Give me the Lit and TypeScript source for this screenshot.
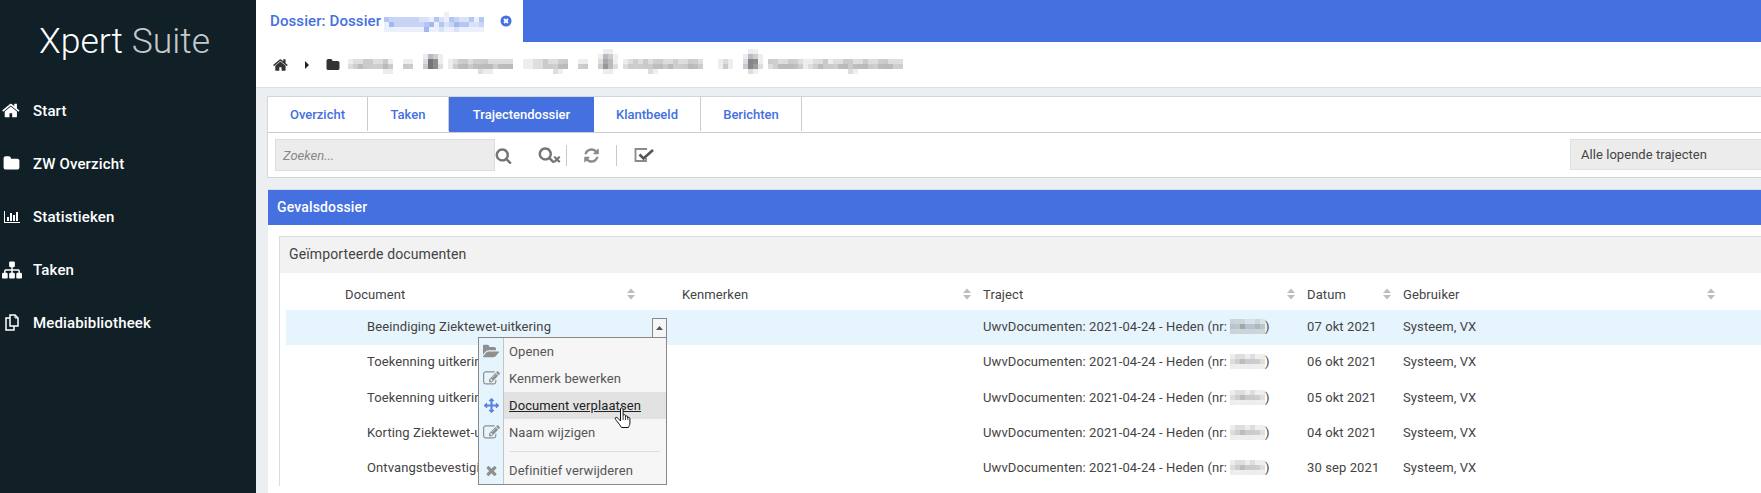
import { LitElement, html, css, svg } from "lit";
import { customElement } from "lit/decorators.js";

const P = {
  home: "M1408 992v480q0 26-19 45t-45 19h-384v-384h-256v384h-384q-26 0-45-19t-19-45v-480q0-1 .5-3t.5-3l575-474 575 474q1 2 1 6zm223-69l-62 74q-8 9-21 11h-3q-13 0-21-7l-692-577-692 577q-12 8-24 7-13-2-21-11l-62-74q-8-10-7-23.500t11-21.500l719-599q32-26 76-26t76 26l244 204v-195q0-14 9-23t23-9h192q14 0 23 9t9 23v408l219 182q10 8 11 21.500t-7 23.500z",
  folder: "M1728 608v704q0 92-66 158t-158 66h-1216q-92 0-158-66t-66-158v-960q0-92 66-158t158-66h320q92 0 158 66t66 158v32h672q92 0 158 66t66 158z",
  chart: "M640 896v512h-256v-512h256zm384-512v1024h-256v-1024h256zm1024 1152v128h-2048v-1536h128v1408h1920zm-640-896v768h-256v-768h256zm384-384v1152h-256v-1152h256z",
  sitemap: "M1792 1248v320q0 40-28 68t-68 28h-320q-40 0-68-28t-28-68v-320q0-40 28-68t68-28h96v-192h-512v192h96q40 0 68 28t28 68v320q0 40-28 68t-68 28h-320q-40 0-68-28t-28-68v-320q0-40 28-68t68-28h96v-192h-512v192h96q40 0 68 28t28 68v320q0 40-28 68t-68 28h-320q-40 0-68-28t-28-68v-320q0-40 28-68t68-28h96v-192q0-52 38-90t90-38h512v-192h-96q-40 0-68-28t-28-68v-320q0-40 28-68t68-28h320q40 0 68 28t28 68v320q0 40-28 68t-68 28h-96v192h512q52 0 90 38t38 90v192h96q40 0 68 28t28 68z",
  search: "M1216 832q0-185-131.500-316.500t-316.500-131.500-316.500 131.500-131.500 316.500 131.500 316.500 316.500 131.500 316.500-131.500 131.500-316.500zm512 832q0 52-38 90t-90 38q-54 0-90-38l-343-342q-179 124-399 124-143 0-273.500-55.500t-225-150-150-225-55.500-273.500 55.500-273.500 150-225 225-150 273.500-55.500 273.500 55.500 225 150 150 225 55.500 273.500q0 220-124 399l343 343q37 37 37 90z",
  refresh: "M1639 1056q0 5-1 7-64 268-268 434.500t-478 166.500q-146 0-282.500-55t-243.500-157l-129 129q-19 19-45 19t-45-19-19-45v-448q0-26 19-45t45-19h448q26 0 45 19t19 45-19 45l-137 137q71 66 161 102t187 36q134 0 250-65t186-179q11-17 53-117 8-23 30-23h192q13 0 22.500 9.500t9.500 22.500zm25-800v448q0 26-19 45t-45 19h-448q-26 0-45-19t-19-45 19-45l138-138q-148-137-349-137-134 0-250 65t-186 179q-11 17-53 117-8 23-30 23h-199q-13 0-22.500-9.500t-9.500-22.500v-7q65-268 270-434.500t480-166.500q146 0 284 55.500t245 156.500l130-129q19-19 45-19t45 19 19 45z",
  open: "M1815 952q0 31-31 66l-336 396q-43 51-120.500 86.500t-143.500 35.500h-1088q-34 0-60.500-13t-26.500-43q0-31 31-66l336-396q43-51 120.500-86.500t143.500-35.500h1088q34 0 60.500 13t26.500 43zm-343-344v160h-832q-94 0-197 47.500t-164 119.500l-337 396-5 6q0-4-.5-12.500t-.5-12.500v-960q0-92 66-158t158-66h320q92 0 158 66t66 158v32h544q92 0 158 66t66 158z",
  edit: "M888 1184l116-116-152-152-116 116v56h96v96h56zm440-720q-16-16-33 1l-350 350q-17 17-1 33t33-1l350-350q17-17 1-33zm80 594v190q0 119-84.500 203.500t-203.500 84.500h-832q-119 0-203.500-84.500t-84.500-203.500v-832q0-119 84.500-203.500t203.500-84.500h832q63 0 117 25 15 7 18 23 3 17-9 29l-49 49q-14 14-32 8-23-6-45-6h-832q-66 0-113 47t-47 113v832q0 66 47 113t113 47h832q66 0 113-47t47-113v-126q0-13 9-22l64-64q15-15 35-7t20 29zm-96-738l288 288-672 672h-288v-288zm444 132l-92 92-288-288 92-92q28-28 68-28t68 28l152 152q28 28 28 68t-28 68z",
  move: "M1792 896q0 26-19 45l-256 256q-19 19-45 19t-45-19-19-45v-128h-384v384h128q26 0 45 19t19 45-19 45l-256 256q-19 19-45 19t-45-19l-256-256q-19-19-19-45t19-45 45-19h128v-384h-384v128q0 26-19 45t-45 19-45-19l-256-256q-19-19-19-45t19-45l256-256q19-19 45-19t45 19 19 45v128h384v-384h-128q-26 0-45-19t-19-45 19-45l256-256q19-19 45-19t45 19l256 256q19 19 19 45t-19 45-45 19h-128v384h384v-128q0-26 19-45t45-19 45 19l256 256q19 19 19 45z",
  times: "M1490 1322q0 40-28 68l-136 136q-28 28-68 28t-68-28l-294-294-294 294q-28 28-68 28t-68-28l-136-136q-28-28-28-68t28-68l294-294-294-294q-28-28-28-68t28-68l136-136q28-28 68-28t68 28l294 294 294-294q28-28 68-28t68 28l136 136q28 28 28 68t-28 68l-294 294 294 294q28 28 28 68z",
};

const fa = (d: string, size: number, color: string, vb = "0 0 1792 1792") =>
  html`<svg width=${size} height=${size} viewBox=${vb} fill=${color} aria-hidden="true"><path d=${d} /></svg>`;

type Cell = [number, number, string];

const mosaic = (cells: Cell[], cols: number, rows: number, tints: string[]) =>
  html`<svg width=${cols * 5} height=${rows * 5} viewBox="0 0 ${cols * 5} ${rows * 5}" shape-rendering="crispEdges" aria-hidden="true">
    ${cells.flatMap(([r, s, d]) =>
      [...d].map((c, i) => svg`<rect x=${(s + i) * 5} y=${r * 5} width="5" height="5" fill=${tints[(s + i) % tints.length]} opacity=${+c / 10} />`)
    )}
  </svg>`;

const GREYS = ["#55505c", "#565f5a", "#5c5850", "#50505e"];
const CRUMB: Cell[] = [
  [0, 51, "11"], [0, 80, "11"],
  [1, 15, "1431"], [1, 50, "1431"], [1, 79, "1431"],
  [2, 0, "122332231"], [2, 11, "11"], [2, 15, "2871"], [2, 20, "1233233322222"], [2, 35, "112232233"], [2, 46, "11"], [2, 50, "2541"], [2, 55, "123232332"], [2, 64, "2322332"], [2, 74, "121"], [2, 79, "2771"], [2, 84, "3322332112231223322"], [2, 103, "32233222"],
  [3, 0, "234333343"], [3, 11, "33"], [3, 15, "3872"], [3, 20, "1344344443444"], [3, 35, "112233344"], [3, 46, "33"], [3, 50, "3642"], [3, 55, "233333443"], [3, 64, "4333443"], [3, 74, "131"], [3, 79, "3762"], [3, 84, "2344443123433344344"], [3, 103, "43344433"],
  [4, 7, "11"], [4, 26, "211"], [4, 41, "21"], [4, 51, "11"], [4, 60, "21"], [4, 80, "21"], [4, 100, "21"],
];
const BLUES = ["#4470e0"];
const TAB: Cell[] = [
  [0, 12, "1"],
  [1, 0, "43333332214214322414"],
  [2, 0, "15333333451423544223"],
  [3, 0, "11111111511211211111"],
];
const NR_DARK: Cell[] = [
  [0, 0, "2221121"],
  [1, 0, "3353343"],
  [2, 0, "2222222"],
];
const NR: Cell[] = [
  [0, 0, "1221211"],
  [1, 0, "2343332"],
  [2, 0, "1111111"],
];

const ROWS = [
  { doc: "Beeindiging Ziektewet-uitkering", date: "07 okt 2021" },
  { doc: "Toekenning uitkerin", date: "06 okt 2021" },
  { doc: "Toekenning uitkerin", date: "05 okt 2021" },
  { doc: "Korting Ziektewet-u", date: "04 okt 2021" },
  { doc: "Ontvangstbevestigi", date: "30 sep 2021" },
];

const sortIcon = html`<svg class="sort" width="8" height="12" viewBox="0 0 8 12" fill="#bdbdbd" aria-hidden="true"><path d="M4 0.500 8 5H0zM4 11.500 0 7h8z" /></svg>`;

@customElement("app-root")
export class AppRoot extends LitElement {
  static styles = css`
    :host { display: block; width: 1761px; height: 493px; overflow: hidden; font-family: Roboto, "Liberation Sans", sans-serif; }
    .root { display: flex; height: 493px; background: #ebeff2; }
    .side { width: 256px; flex: none; background: #111f27; color: #fff; }
    .logo { height: 84px; padding: 18px 0 0 39px; box-sizing: border-box; font-size: 35.500px; font-weight: 300; line-height: 46px; }
    .logo span { color: #c4c9cc; }
    .nav { display: flex; flex-direction: column; }
    .nav a { display: flex; align-items: center; gap: 10px; height: 53px; font-size: 15px; font-weight: 500; letter-spacing: .15px; }
    .nav .ic { width: 23px; display: flex; justify-content: center; }
    .main { flex: 1; min-width: 0; display: flex; flex-direction: column; }
    .top { height: 42px; background: #4470e0; flex: none; }
    .doc-tab { width: 267px; height: 42px; background: #fff; color: #4470e0; display: flex; align-items: center; padding-left: 14px; box-sizing: border-box; font-size: 15px; font-weight: 500; letter-spacing: .1px; gap: 3px; }
    .doc-tab svg:first-of-type { margin-top: 1px; }
    .close { margin-left: 13px; }
    .crumb { height: 45px; background: #fff; border-bottom: 1px solid #dde0e3; display: flex; align-items: center; padding-left: 17px; flex: none; }
    .caret { margin: 0 17px 0 16px; }
    .crumb .blur { margin: 0 0 3px 8px; }
    .content { padding: 8px 0 0 11px; flex: 1; min-height: 0; display: flex; flex-direction: column; }
    .panel { background: #fff; border: 1px solid #d3d6d9; border-right: 0; height: 82px; box-sizing: border-box; flex: none; }
    .tabs { display: flex; height: 36px; border-bottom: 1px solid #ccc; box-sizing: border-box; }
    .tab { display: flex; align-items: center; justify-content: center; border-right: 1px solid #ccc; box-sizing: border-box; color: #4470e0; font-size: 13px; font-weight: 500; height: 34px; }
    .tab.on { background: #4470e0; color: #fff; height: 35px; border-right: 0; }
    .bar { display: flex; align-items: center; height: 45px; padding: 0 0 1px 7px; box-sizing: border-box; }
    .search { width: 220px; height: 32px; box-sizing: border-box; background: #ececec; border: 1px solid #ddd; padding-left: 7px; display: flex; align-items: center; color: #888; font-style: italic; font-size: 13px; }
    .b1 { display: flex; }
    .b2 { margin-left: 26px; display: flex; }
    .sep { width: 1px; height: 21px; background: #c9c9c9; }
    .s1 { margin-left: 4px; }
    .s2 { margin-left: 16px; }
    .b3 { margin-left: 16px; display: flex; }
    .b4 { margin-left: 17px; display: flex; }
    .xm { margin: 8px 0 0 -3px; }
    .select { margin-left: auto; width: 191px; height: 31px; box-sizing: border-box; background: #ececec; border: 1px solid #e0e0e0; border-right: 0; margin-top: -1px; padding-left: 10px; display: flex; align-items: center; font-size: 13px; letter-spacing: .05px; color: #444; }
    .case { margin: 11px 0 0 1px; background: #fff; flex: 1; min-height: 0; border-top: 1px solid #d8dde8; }
    .case-h { height: 35px; background: #4470e0; color: #fff; display: flex; align-items: center; padding: 0 0 2px 9px; box-sizing: border-box; font-size: 14px; font-weight: 500; letter-spacing: .15px; }
    .docs { margin: 11px 0 0 11px; border: 1px solid #d8dce6; border-right: 0; border-bottom: 0; }
    .docs-h { height: 36px; background: #f2f2f2; display: flex; align-items: center; padding: 0 0 2px 9px; box-sizing: border-box; font-size: 14px; letter-spacing: .12px; color: #444; }
    .table { position: relative; margin-left: 6px; font-size: 13px; letter-spacing: .1px; color: #444; }
    .grid { display: grid; grid-template-columns: 352px 36px 301px 324px 96px 324px 1fr; align-items: center; }
    .head { height: 37px; padding-top: 5px; box-sizing: border-box; }
    .row { height: 35.250px; padding-bottom: 2px; box-sizing: border-box; }
    .row.on { background: #e6f4fd; }
    .th { display: flex; align-items: center; justify-content: space-between; padding: 0 4px 0 8px; }
    .th.first { padding: 0 3px 0 59px; }
    .td { padding-left: 8px; white-space: nowrap; display: flex; align-items: center; }
    .td.first { padding-left: 81px; }
    .nr { height: 15px; margin-left: 3px; }
    .ddb { width: 15px; height: 20px; box-sizing: border-box; background: #f6f6f6; border: 1px solid #888; margin: 8px 0 0 14px; display: flex; align-items: center; justify-content: center; }
    .action { align-self: start; }
    .menu { position: absolute; left: 192px; top: 64px; width: 189px; height: 148px; box-sizing: border-box; border: 1px solid #888; background: #f6f6f6; font-size: 13px; letter-spacing: .1px; color: #555; }
    .mi { display: grid; grid-template-columns: 25px 1fr; height: 27px; }
    .mi .g { background: #e6f4fd; border-right: 1px solid #c4c4c4; display: flex; align-items: center; justify-content: center; }
    .mi .t { display: flex; align-items: center; padding-left: 5px; }
    .mi.hov .t { background: #e2e2e2; color: #222; text-decoration: underline; }
    .mi.gap { height: 10px; }
    .mi.gap .t { padding: 0 6px; }
    .mi.gap hr { width: 100%; border: 0; border-top: 1px solid #ddd; margin: 0; }
    .mi.last { height: 28px; }
    .hand { position: absolute; left: 328px; top: 134px; }
  `;

  render() {
    const nav = [
      ["Start", fa(P.home, 19, "#fff")],
      ["ZW Overzicht", fa(P.folder, 17, "#fff")],
      ["Statistieken", fa(P.chart, 16, "#fff", "0 0 2048 1792")],
      ["Taken", fa(P.sitemap, 20, "#fff")],
      ["Mediabibliotheek", html`<svg width="15" height="17" viewBox="0 0 15 17" fill="none" stroke="#fff" stroke-width="1.500" aria-hidden="true"><path d="M6 1h5l3 3v8H6zM6 4H2v12h8v-4" /><path d="M11 1v3h3" stroke-width="1" /></svg>`],
    ] as const;
    const tabs = [["Overzicht", 100], ["Taken", 81], ["Trajectendossier", 145], ["Klantbeeld", 107], ["Berichten", 101]] as const;
    return html`<div class="root">
      <aside class="side">
        <div class="logo">Xpert <span>Suite</span></div>
        <nav class="nav">${nav.map(([t, i]) => html`<a><span class="ic">${i}</span>${t}</a>`)}</nav>
      </aside>
      <main class="main">
        <div class="top">
          <div class="doc-tab">Dossier: Dossier ${mosaic(TAB, 20, 4, BLUES)}
            <svg class="close" width="12" height="12" viewBox="0 0 12 12" aria-hidden="true"><circle cx="6" cy="6" r="5.500" fill="#4470e0" /><path d="M4 4l4 4M8 4l-4 4" stroke="#fff" stroke-width="1.800" /></svg>
          </div>
        </div>
        <div class="crumb">
          ${fa(P.home, 16, "#333")}
          <svg class="caret" width="4" height="8" viewBox="0 0 4 8" fill="#222" aria-hidden="true"><path d="M0 0l4 4-4 4z" /></svg>
          ${fa(P.folder, 14, "#333")}
          <span class="blur">${mosaic(CRUMB, 112, 5, GREYS)}</span>
        </div>
        <div class="content">
          <section class="panel">
            <div class="tabs">${tabs.map(([t, w], i) => html`<div class="tab ${i === 2 ? "on" : ""}" style="width:${w}px">${t}</div>`)}</div>
            <div class="bar">
              <div class="search">Zoeken...</div>
              <span class="b1">${fa(P.search, 17, "#757575")}</span>
              <span class="b2">${fa(P.search, 17, "#757575")}<svg class="xm" width="10" height="10" viewBox="0 0 1792 1792" fill="#757575" aria-hidden="true"><path d=${P.times} /></svg></span>
              <span class="sep s1"></span>
              <span class="b3">${fa(P.refresh, 17, "#8a8a8a")}</span>
              <span class="sep s2"></span>
              <span class="b4"><svg width="21" height="16" viewBox="0 0 21 16" fill="none" aria-hidden="true"><path d="M13 2H1.500v12H12v-3" stroke="#8a8a8a" stroke-width="1.800" /><path d="M5.500 7.500l4 4L19 3" stroke="#555" stroke-width="2.600" /></svg></span>
              <div class="select">Alle lopende trajecten</div>
            </div>
          </section>
          <section class="case">
            <div class="case-h">Gevalsdossier</div>
            <div class="docs">
              <div class="docs-h">Geïmporteerde documenten</div>
              <div class="table">
                <div class="grid head">
                  <div class="th first">Document ${sortIcon}</div>
                  <div></div>
                  <div class="th">Kenmerken ${sortIcon}</div>
                  <div class="th">Traject ${sortIcon}</div>
                  <div class="th">Datum ${sortIcon}</div>
                  <div class="th">Gebruiker ${sortIcon}</div>
                </div>
                ${ROWS.map((r, i) => html`<div class="grid row ${i === 0 ? "on" : ""}">
                  <div class="td first">${r.doc}</div>
                  <div class="action">${i === 0 ? html`<div class="ddb"><svg width="7" height="4" viewBox="0 0 7 4" fill="#555" aria-hidden="true"><path d="M3.500 0L7 4H0z" /></svg></div>` : ""}</div>
                  <div></div>
                  <div class="td">UwvDocumenten: 2021-04-24 - Heden (nr:<span class="nr">${mosaic(i === 0 ? NR_DARK : NR, 7, 3, GREYS)}</span>)</div>
                  <div class="td">${r.date}</div>
                  <div class="td">Systeem, VX</div>
                </div>`)}
                <div class="menu">
                  <div class="mi"><div class="g">${fa(P.open, 17, "#8f8f8f", "0 0 1920 1792")}</div><div class="t">Openen</div></div>
                  <div class="mi"><div class="g">${fa(P.edit, 17, "#8f8f8f")}</div><div class="t">Kenmerk bewerken</div></div>
                  <div class="mi hov"><div class="g">${fa(P.move, 15, "#5a82e0")}</div><div class="t">Document verplaatsen</div></div>
                  <div class="mi"><div class="g">${fa(P.edit, 17, "#8f8f8f")}</div><div class="t">Naam wijzigen</div></div>
                  <div class="mi gap"><div class="g"></div><div class="t"><hr /></div></div>
                  <div class="mi last"><div class="g">${fa(P.times, 15, "#8f8f8f")}</div><div class="t">Definitief verwijderen</div></div>
                </div>
                <svg class="hand" width="18" height="23" viewBox="0 0 18 23" aria-hidden="true"><path d="M6.500 2c0-1.600 2.600-1.600 2.600 0v6.500c.2-1.200 2.300-1.200 2.400.2v1c.2-1.200 2.200-1 2.300.3v1c.2-1 2-.9 2.100.5v4.500c0 2-1 3-1.500 4.500H7.500c-1-2-2.500-3.500-4-5.500C2 13 1 12 1.200 11c.3-1 1.800-.8 2.800.3l2.500 2.700z" fill="#fff" stroke="#111" stroke-width="1" /><path d="M9.100 9v4M11.500 9.500v3.500M13.800 10.500V13" stroke="#111" stroke-width=".8" fill="none" /></svg>
              </div>
            </div>
          </section>
        </div>
      </main>
    </div>`;
  }
}
